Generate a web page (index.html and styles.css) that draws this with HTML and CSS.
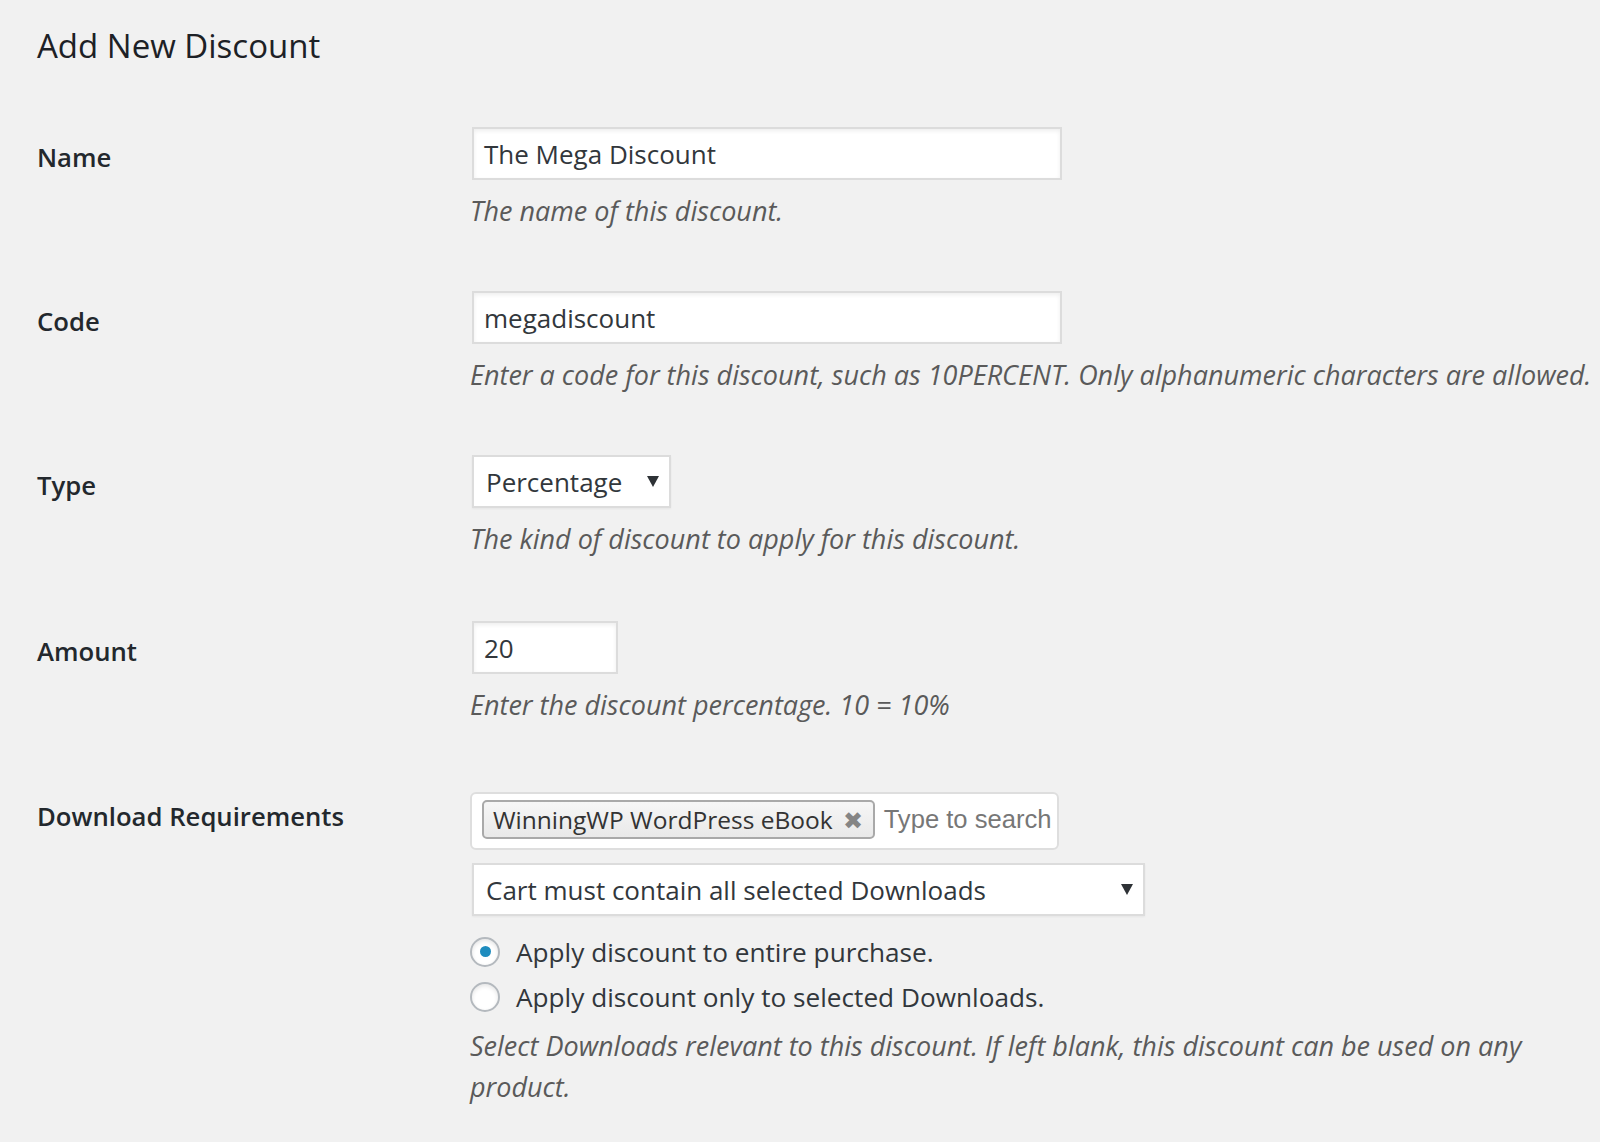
FILE: index.html
```html
<!DOCTYPE html>
<html lang="en">
<head>
<meta charset="utf-8">
<title>Add New Discount</title>
<link rel="stylesheet" href="styles.css">
</head>
<body>
<div class="wrap">
  <h1 class="title">Add New Discount</h1>
  <div class="form">
    <div class="row">
      <div class="label">Name</div>
      <div class="field">
        <div class="input wide">The Mega Discount</div>
        <p class="desc">The name of this discount.</p>
      </div>
    </div>
    <div class="row">
      <div class="label">Code</div>
      <div class="field">
        <div class="input wide">megadiscount</div>
        <p class="desc">Enter a code for this discount, such as 10PERCENT. Only alphanumeric characters are allowed.</p>
      </div>
    </div>
    <div class="row type-row">
      <div class="label">Type</div>
      <div class="field">
        <div class="select type-select"><span>Percentage</span><span class="arrow"></span></div>
        <p class="desc">The kind of discount to apply for this discount.</p>
      </div>
    </div>
    <div class="row amount-row">
      <div class="label">Amount</div>
      <div class="field">
        <div class="input small">20</div>
        <p class="desc">Enter the discount percentage. 10 = 10%</p>
      </div>
    </div>
    <div class="row last">
      <div class="label">Download Requirements</div>
      <div class="field">
        <div class="chooser">
          <span class="tag">WinningWP WordPress eBook<span class="tag-x">✖</span></span>
          <span class="placeholder">Type to search</span>
        </div>
        <div class="select cart-select"><span>Cart must contain all selected Downloads</span><span class="arrow"></span></div>
        <div class="radios">
          <div class="radio-line"><span class="radio checked"></span><span>Apply discount to entire purchase.</span></div>
          <div class="radio-line"><span class="radio"></span><span>Apply discount only to selected Downloads.</span></div>
        </div>
        <p class="desc after-radios">Select Downloads relevant to this discount. If left blank, this discount can be used on any product.</p>
      </div>
    </div>
  </div>
</div>
</body>
</html>
```
FILE: styles.css
```css
html, body {
  margin: 0;
  padding: 0;
}
body {
  background: #f1f1f1;
  color: #23282d;
  font-family: "Open Sans", "Noto Sans", sans-serif;
  width: 1600px;
  height: 1142px;
  overflow: hidden;
}
.wrap {
  padding-left: 37px;
}
.title {
  margin: 24px 0 0;
  font-size: 33px;
  line-height: 44px;
  font-weight: 400;
  color: #1d2126;
}
.form {
  margin-top: 59px;
}
.row {
  display: grid;
  grid-template-columns: 433px 1fr;
  padding-bottom: 60px;
}
.row.type-row {
  padding-bottom: 62px;
}
.row.amount-row {
  padding-bottom: 61px;
}
.label {
  margin-top: 11px;
  font-size: 25.7px;
  line-height: 40px;
  font-weight: 600;
  color: #23282d;
}
.field {
  min-width: 0;
}
.input, .select {
  box-sizing: border-box;
  height: 53px;
  margin-left: 2px;
  background: #fff;
  border: 2px solid #dcdcdc;
  box-shadow: inset 0 2px 4px rgba(0, 0, 0, 0.07);
  font-size: 26px;
  color: #32373c;
  display: flex;
  align-items: center;
}
.input {
  padding: 0 10px;
}
.input.wide { width: 590px; }
.input.small { width: 146px; }
.select {
  padding: 0 10px 0 12px;
  justify-content: space-between;
  box-shadow: 0 1px 2px rgba(0, 0, 0, 0.05);
}
.type-select { width: 199px; }
.cart-select { width: 673px; margin-top: 13px; }
.arrow {
  width: 0;
  height: 0;
  border-left: 6px solid transparent;
  border-right: 6px solid transparent;
  border-top: 11px solid #2e3236;
}
.desc {
  margin: 10px 0 0;
  font-size: 27px;
  line-height: 41px;
  font-style: italic;
  color: #5a5a5a;
}
.chooser {
  box-sizing: border-box;
  width: 589px;
  height: 58px;
  margin-top: 6px;
  padding: 6px 10px;
  background: #fff;
  border: 2px solid #dedede;
  border-radius: 6px;
  display: flex;
  align-items: flex-start;
  white-space: nowrap;
}
.tag {
  flex-shrink: 0;
  box-sizing: border-box;
  height: 39px;
  padding: 0 10px 0 9px;
  border: 2px solid #a9a9a9;
  border-radius: 5px;
  background: linear-gradient(#f6f6f6, #e9e9e9);
  font-size: 24.5px;
  color: #333;
  display: flex;
  align-items: center;
}
.tag-x {
  margin-left: 10px;
  font-size: 24px;
  line-height: 1;
  color: #858585;
}
.placeholder {
  flex-shrink: 0;
  margin-left: 9px;
  font-family: "Liberation Sans", Arial, sans-serif;
  font-size: 25.6px;
  line-height: 39px;
  color: #777;
}
.radios {
  margin-top: 13px;
}
.radio-line {
  display: flex;
  align-items: center;
  height: 45px;
  font-size: 26.2px;
  color: #32373c;
}
.radio {
  box-sizing: border-box;
  width: 30px;
  height: 30px;
  margin-right: 16px;
  border-radius: 50%;
  border: 2px solid #b4b9be;
  background: #fff;
  box-shadow: inset 0 2px 4px rgba(0, 0, 0, 0.1);
  display: flex;
  align-items: center;
  justify-content: center;
}
.radio.checked::before {
  content: "";
  width: 11px;
  height: 11px;
  border-radius: 50%;
  background: #1e8cbe;
}
.desc.after-radios {
  margin-top: 6px;
}
```
